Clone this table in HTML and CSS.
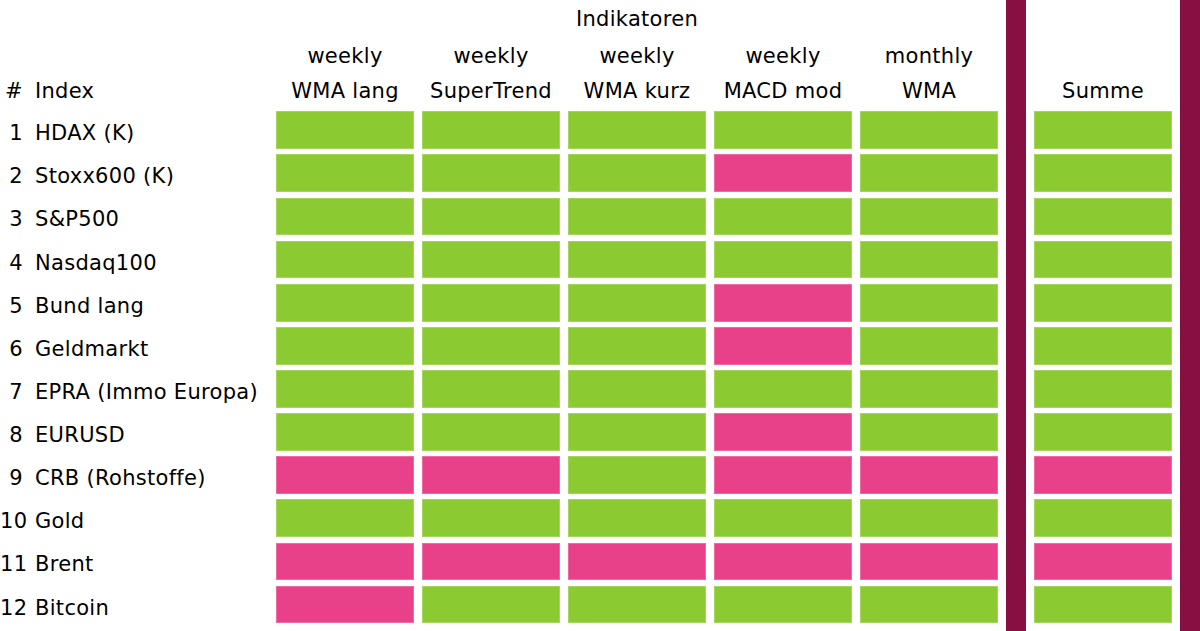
FILE: index.html
```html
<!DOCTYPE html>
<html lang="de">
<head>
<meta charset="utf-8">
<title>Indikatoren</title>
<link rel="stylesheet" href="styles.css">
</head>
<body>
<div class="board">
  <div class="bar bar-mid"></div>
  <div class="bar bar-end"></div>

  <div class="group-title">Indikatoren</div>

  <div class="hd hd-top c1">weekly</div>
  <div class="hd hd-top c2">weekly</div>
  <div class="hd hd-top c3">weekly</div>
  <div class="hd hd-top c4">weekly</div>
  <div class="hd hd-top c5">monthly</div>

  <div class="hd hd-bot num-h">#</div>
  <div class="hd hd-bot name-h">Index</div>
  <div class="hd hd-bot c1">WMA lang</div>
  <div class="hd hd-bot c2">SuperTrend</div>
  <div class="hd hd-bot c3">WMA kurz</div>
  <div class="hd hd-bot c4">MACD mod</div>
  <div class="hd hd-bot c5">WMA</div>
  <div class="hd hd-bot cs">Summe</div>

  <div class="row r1">
    <div class="num">1</div><div class="name">HDAX (K)</div>
    <div class="cell g c1"></div><div class="cell g c2"></div><div class="cell g c3"></div><div class="cell g c4"></div><div class="cell g c5"></div><div class="cell g cs"></div>
  </div>
  <div class="row r2">
    <div class="num">2</div><div class="name">Stoxx600 (K)</div>
    <div class="cell g c1"></div><div class="cell g c2"></div><div class="cell g c3"></div><div class="cell p c4"></div><div class="cell g c5"></div><div class="cell g cs"></div>
  </div>
  <div class="row r3">
    <div class="num">3</div><div class="name">S&amp;P500</div>
    <div class="cell g c1"></div><div class="cell g c2"></div><div class="cell g c3"></div><div class="cell g c4"></div><div class="cell g c5"></div><div class="cell g cs"></div>
  </div>
  <div class="row r4">
    <div class="num">4</div><div class="name">Nasdaq100</div>
    <div class="cell g c1"></div><div class="cell g c2"></div><div class="cell g c3"></div><div class="cell g c4"></div><div class="cell g c5"></div><div class="cell g cs"></div>
  </div>
  <div class="row r5">
    <div class="num">5</div><div class="name">Bund lang</div>
    <div class="cell g c1"></div><div class="cell g c2"></div><div class="cell g c3"></div><div class="cell p c4"></div><div class="cell g c5"></div><div class="cell g cs"></div>
  </div>
  <div class="row r6">
    <div class="num">6</div><div class="name">Geldmarkt</div>
    <div class="cell g c1"></div><div class="cell g c2"></div><div class="cell g c3"></div><div class="cell p c4"></div><div class="cell g c5"></div><div class="cell g cs"></div>
  </div>
  <div class="row r7">
    <div class="num">7</div><div class="name">EPRA (Immo Europa)</div>
    <div class="cell g c1"></div><div class="cell g c2"></div><div class="cell g c3"></div><div class="cell g c4"></div><div class="cell g c5"></div><div class="cell g cs"></div>
  </div>
  <div class="row r8">
    <div class="num">8</div><div class="name">EURUSD</div>
    <div class="cell g c1"></div><div class="cell g c2"></div><div class="cell g c3"></div><div class="cell p c4"></div><div class="cell g c5"></div><div class="cell g cs"></div>
  </div>
  <div class="row r9">
    <div class="num">9</div><div class="name">CRB (Rohstoffe)</div>
    <div class="cell p c1"></div><div class="cell p c2"></div><div class="cell g c3"></div><div class="cell p c4"></div><div class="cell p c5"></div><div class="cell p cs"></div>
  </div>
  <div class="row r10">
    <div class="num">10</div><div class="name">Gold</div>
    <div class="cell g c1"></div><div class="cell g c2"></div><div class="cell g c3"></div><div class="cell g c4"></div><div class="cell g c5"></div><div class="cell g cs"></div>
  </div>
  <div class="row r11">
    <div class="num">11</div><div class="name">Brent</div>
    <div class="cell p c1"></div><div class="cell p c2"></div><div class="cell p c3"></div><div class="cell p c4"></div><div class="cell p c5"></div><div class="cell p cs"></div>
  </div>
  <div class="row r12">
    <div class="num">12</div><div class="name">Bitcoin</div>
    <div class="cell p c1"></div><div class="cell g c2"></div><div class="cell g c3"></div><div class="cell g c4"></div><div class="cell g c5"></div><div class="cell g cs"></div>
  </div>
</div>
</body>
</html>
```

FILE: styles.css
```css
html, body {
  margin: 0;
  padding: 0;
  background: #ffffff;
  overflow: hidden;
}

.board {
  display: grid;
  grid-template-columns: 27px 233px repeat(5, 138px) 20px 138px 20px;
  grid-template-rows: 33.9px 31.8px 29.35px repeat(12, 37.7px) 1fr;
  column-gap: 8px;
  row-gap: 5.45px;
  height: 631px;
  width: 1200px;
  font-family: "DejaVu Sans", "Liberation Sans", sans-serif;
  font-size: 21px;
  letter-spacing: 0.3px;
  color: #000000;
}

.bar {
  grid-row: 1 / -1;
  background: #870f42;
}
.bar-mid { grid-column: 8; }
.bar-end { grid-column: 10; }

.group-title {
  grid-row: 1;
  grid-column: 3 / 8;
  text-align: center;
  align-self: end;
  line-height: 24px;
  padding-bottom: 3px;
}

.hd {
  align-self: end;
  line-height: 24px;
  padding-bottom: 3px;
  text-align: center;
  white-space: nowrap;
}
.hd-top { grid-row: 2; }
.hd-bot { grid-row: 3; }

.c1 { grid-column: 3; }
.c2 { grid-column: 4; }
.c3 { grid-column: 5; }
.c4 { grid-column: 6; }
.c5 { grid-column: 7; }
.cs { grid-column: 9; }

.num-h {
  grid-column: 1;
  text-align: right;
  padding-right: 4px;
}
.name-h {
  grid-column: 2;
  text-align: left;
}

.row { display: contents; }
.r1 > * { grid-row: 4; }
.r2 > * { grid-row: 5; }
.r3 > * { grid-row: 6; }
.r4 > * { grid-row: 7; }
.r5 > * { grid-row: 8; }
.r6 > * { grid-row: 9; }
.r7 > * { grid-row: 10; }
.r8 > * { grid-row: 11; }
.r9 > * { grid-row: 12; }
.r10 > * { grid-row: 13; }
.r11 > * { grid-row: 14; }
.r12 > * { grid-row: 15; }

.num {
  grid-column: 1;
  text-align: right;
  padding-right: 4px;
  align-self: center;
  padding-top: 6px;
  line-height: 24px;
  white-space: nowrap;
}
.name {
  grid-column: 2;
  align-self: center;
  padding-top: 6px;
  line-height: 24px;
  white-space: nowrap;
}

.cell {
  box-shadow: inset 0 0 0 1px rgba(255, 255, 255, 0.22);
}
.g { background: #8cca32; }
.p { background: #e8418a; }
```
